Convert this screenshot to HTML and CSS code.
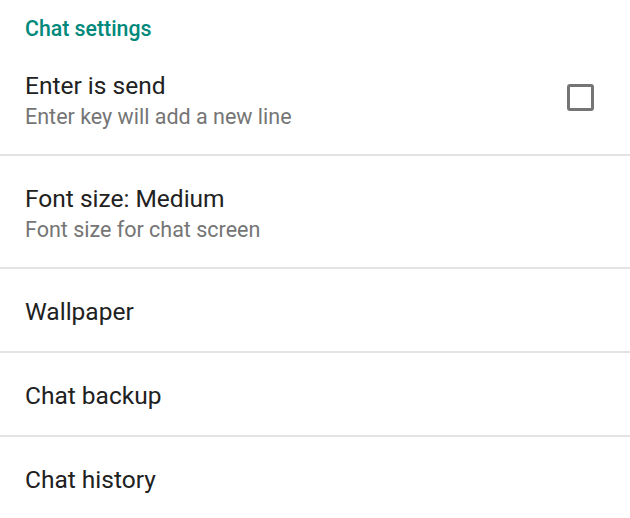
FILE: index.html
```html
<!DOCTYPE html>
<html>
<head>
<meta charset="utf-8">
<link rel="stylesheet" href="styles.css">
</head>
<body>
<div class="screen">
  <div class="section-header">Chat settings</div>
  <div class="row">
    <div class="texts">
      <div class="title">Enter is send</div>
      <div class="subtitle">Enter key will add a new line</div>
    </div>
    <span class="checkbox"></span>
  </div>
  <div class="row">
    <div class="texts">
      <div class="title">Font size: Medium</div>
      <div class="subtitle">Font size for chat screen</div>
    </div>
  </div>
  <div class="row">
    <div class="texts"><div class="title">Wallpaper</div></div>
  </div>
  <div class="row">
    <div class="texts"><div class="title">Chat backup</div></div>
  </div>
  <div class="row last">
    <div class="texts"><div class="title">Chat history</div></div>
  </div>
</div>
</body>
</html>
```
FILE: styles.css
```css
html, body {
  margin: 0;
  padding: 0;
  background: #ffffff;
}
body {
  font-family: Roboto, "Noto Sans", sans-serif;
  width: 630px;
  height: 518px;
  overflow: hidden;
}
.screen {
  display: flex;
  flex-direction: column;
}
.section-header {
  padding: 15px 25px 0;
  font-size: 21.3px;
  line-height: 28px;
  font-weight: 500;
  color: #00897b;
}
.row {
  display: flex;
  align-items: center;
  justify-content: space-between;
  padding: 27px 36px 23px 25px;
  border-bottom: 2px solid #e3e3e3;
}
.row.last {
  border-bottom: none;
}
.texts {
  display: flex;
  flex-direction: column;
}
.title {
  font-size: 24.5px;
  line-height: 32px;
  color: #212121;
}
.subtitle {
  font-size: 21.5px;
  line-height: 29px;
  color: #757575;
}
.checkbox {
  width: 27px;
  height: 27px;
  box-sizing: border-box;
  border: 3px solid #757575;
  border-radius: 3px;
  margin-top: -6px;
}
```
